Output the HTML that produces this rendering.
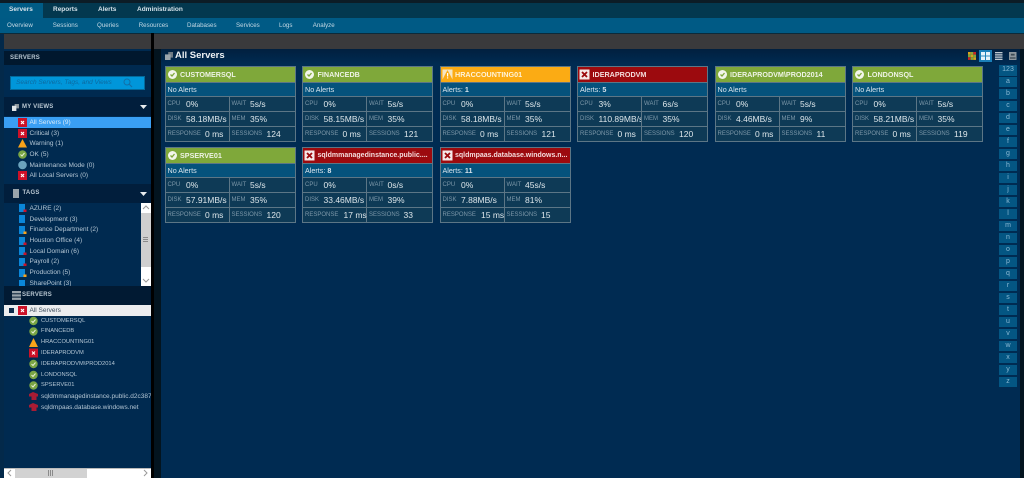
<!DOCTYPE html>
<html style="background:#002a50"><head><meta charset="utf-8"><style>
html,body{margin:0;padding:0;width:1024px;height:478px;overflow:hidden;background:#002a50}
body{font-family:"Liberation Sans",sans-serif;position:relative;color:#fff;filter:blur(.35px)}
div,span,svg{position:absolute;box-sizing:border-box;white-space:nowrap}
.tab{top:3px;font-size:6.500px;font-weight:bold;color:#d5e2ea;line-height:14px}
.sub{top:19px;font-size:6.200px;color:#c3d8e4;line-height:13px}
.c{width:131px;height:76px;background:#0e3a56;border:1px solid #5c7686}
.h{left:0;top:0;width:129px;height:15px;font-size:7.200px;font-weight:bold;line-height:15px;color:#eef3e4;padding-left:14.500px;overflow:hidden}
.g{background:#7fa83a}.o{background:#fbab14}.r{background:#9c0a0e}
.a{left:0;top:15px;width:129px;height:15px;background:#05527c;border-top:1px solid #5c7686;border-bottom:1px solid #5c7686;font-size:7.200px;line-height:13px;padding-left:2px;color:#d8e4ec}
.l{font-size:6px;color:#7c97a8;line-height:15px}
.v{font-size:8.500px;color:#dde6ea;line-height:15px}
.hl{left:0;width:129px;height:1px;background:#5c7686}
.vl{left:63px;top:30px;width:1px;height:44px;background:#5c7686}
.si{font-size:6.500px;color:#b3c6d4;line-height:11px}
.u{font-size:5.750px}
.ic{left:0;top:1px;width:13px;height:13px}
.az{left:999px;width:18px;height:10.500px;margin-top:-.5px;background:#045683;color:#8ab9d4;font-size:7px;line-height:10.500px;text-align:center}
.bar{left:4px;width:147px;height:19px;background:#011e3c}
.bt{font-size:6px;font-weight:bold;color:#b9c7d2;letter-spacing:.2px}
</style></head><body>
<div style="left:0;top:0;width:1024px;height:3px;background:#0c1c26"></div>
<div style="left:0;top:3px;width:1024px;height:15px;background:#03384f"></div>
<div style="left:0;top:3px;width:43px;height:15px;background:#005b85"></div>
<div style="left:0;top:18px;width:1024px;height:15px;background:#005a85"></div>
<div style="left:0;top:33px;width:1024px;height:1px;background:#0c2a3a"></div>
<div class="tab" style="left:9px">Servers</div><div class="tab" style="left:53px">Reports</div><div class="tab" style="left:98px">Alerts</div><div class="tab" style="left:137px">Administration</div>
<div class="sub" style="left:7px">Overview</div><div class="sub" style="left:52.700px">Sessions</div><div class="sub" style="left:97px">Queries</div><div class="sub" style="left:138.700px">Resources</div><div class="sub" style="left:187px">Databases</div><div class="sub" style="left:236px">Services</div><div class="sub" style="left:279px">Logs</div><div class="sub" style="left:312.700px">Analyze</div>

<div style="left:0;top:34px;width:4px;height:444px;background:#03294a"></div>
<div style="left:4px;top:34px;width:147px;height:15px;background:#3a3a3c"></div>
<div style="left:154px;top:34px;width:870px;height:15px;background:#3a3a3c"></div>
<div style="left:151px;top:33px;width:3px;height:445px;background:#000"></div>
<div style="left:154px;top:49px;width:7px;height:429px;background:#03141f"></div>
<div style="left:161px;top:49px;width:859px;height:429px;background:#002b52"></div>
<div style="left:161px;top:49px;width:859px;height:15px;background:linear-gradient(#01203f,#002b52)"></div>
<div style="left:1020px;top:49px;width:4px;height:429px;background:#03141f"></div>

<div style="left:4px;top:51px;width:147px;height:14px;background:#01182e"></div>
<div class="bt" style="left:10px;top:54px;line-height:8px">SERVERS</div>
<div style="left:10px;top:76px;width:134.500px;height:13.500px;background:#0096da;border:1px solid #046a9b"></div>
<div style="left:16px;top:78px;font-size:6.500px;font-style:italic;color:#0c6aa0;line-height:9px">Search Servers, Tags, and Views</div>
<svg style="left:123px;top:78px" width="10" height="10" viewBox="0 0 10 10"><circle cx="4" cy="4" r="3" fill="none" stroke="#1270a8" stroke-width="1"/><path d="M6 6l3 3" stroke="#1270a8" stroke-width="1.200"/></svg>

<div class="bar" style="top:97px"></div>
<svg style="left:12px;top:104px" width="7" height="7" viewBox="0 0 8 8"><rect x="3" y="0" width="5" height="5" fill="#8b959c"/><rect x="0" y="2" width="5" height="6" fill="#dfe3e6"/></svg>
<div class="bt" style="left:22px;top:103px;line-height:8px">MY VIEWS</div>
<svg style="left:140px;top:105px" width="7" height="4" viewBox="0 0 7 4"><path d="M0 0h7L3.500 4z" fill="#e8ecee"/></svg>
<div style="left:4px;top:117px;width:147px;height:11px;background:#3a9ff3"></div>

<svg style="left:18px;top:117px" width="9" height="10" viewBox="0 0 9 10"><rect y="1" width="9" height="9" fill="#cc1128"/><path d="M3 4l3 3M6 4l-3 3" stroke="#fff" stroke-width="1.200"/></svg>
<div class="si" style="left:29.500px;top:116.500px;color:#d8ebfa">All Servers (9)</div>
<svg style="left:18px;top:128px" width="9" height="10" viewBox="0 0 9 10"><rect y="1" width="9" height="9" fill="#cc1128"/><path d="M3 4l3 3M6 4l-3 3" stroke="#fff" stroke-width="1.200"/></svg>
<div class="si" style="left:29.500px;top:127.500px">Critical (3)</div>
<svg style="left:18px;top:138px" width="9" height="10" viewBox="0 0 9 10"><path d="M4.500 1L9 9.500H0z" fill="#f9a31a"/></svg>
<div class="si" style="left:29.500px;top:138px">Warning (1)</div>
<svg style="left:18px;top:149px" width="9" height="10" viewBox="0 0 9 10"><circle cx="4.500" cy="5.500" r="4.300" fill="#79a544"/><path d="M2.500 5.500l1.500 1.500 2.500-3" fill="none" stroke="#e8f0d8" stroke-width="1"/></svg>
<div class="si" style="left:29.500px;top:148.500px">OK (5)</div>
<svg style="left:18px;top:160px" width="9" height="10" viewBox="0 0 9 10"><circle cx="4.500" cy="5" r="4.300" fill="#6ba3bd"/></svg>
<div class="si" style="left:29.500px;top:159.500px">Maintenance Mode (0)</div>
<svg style="left:18px;top:170px" width="9" height="10" viewBox="0 0 9 10"><rect y="1" width="9" height="9" fill="#cc1128"/><path d="M3 4l3 3M6 4l-3 3" stroke="#fff" stroke-width="1.200"/></svg>
<div class="si" style="left:29.500px;top:170px">All Local Servers (0)</div>

<div class="bar" style="top:184px"></div>
<svg style="left:13px;top:189px" width="6" height="9" viewBox="0 0 6 9"><rect width="6" height="9" fill="#9aa4ab"/></svg>
<div class="bt" style="left:22.500px;top:189px;line-height:8px">TAGS</div>
<svg style="left:140px;top:192px" width="7" height="4" viewBox="0 0 7 4"><path d="M0 0h7L3.500 4z" fill="#e8ecee"/></svg>

<div style="left:4px;top:203px;width:137px;height:83px;overflow:hidden">
<svg style="left:15px;top:1px" width="10" height="82" viewBox="0 0 10 82"><g fill="#0a86d8"><path d="M0 0h6v8H0z"/><path d="M0 11h6v8H0z"/><path d="M0 22h6v8H0z"/><path d="M0 33h6v8H0z"/><path d="M0 43h6v8H0z"/><path d="M0 54h6v8H0z"/><path d="M0 65h6v8H0z"/><path d="M0 76h6v8H0z"/></g><g fill="#cc1128"><rect x="4.500" y="5.500" width="3" height="2.500"/><rect x="4.500" y="38.500" width="3" height="2.500"/><rect x="4.500" y="48.500" width="3" height="2.500"/><rect x="4.500" y="59.500" width="3" height="2.500"/></g><g fill="#f9a31a"><rect x="4.500" y="27.500" width="3" height="2.500"/><rect x="4.500" y="70.500" width="3" height="2.500"/></g></svg>
<div class="si" style="left:25.500px;top:-.5px">AZURE (2)</div>
<div class="si" style="left:25.500px;top:10.500px">Development (3)</div>
<div class="si" style="left:25.500px;top:21px">Finance Department (2)</div>
<div class="si" style="left:25.500px;top:32px">Houston Office (4)</div>
<div class="si" style="left:25.500px;top:42.500px">Local Domain (6)</div>
<div class="si" style="left:25.500px;top:53px">Payroll (2)</div>
<div class="si" style="left:25.500px;top:64px">Production (5)</div>
<div class="si" style="left:25.500px;top:74.500px">SharePoint (3)</div>
</div>
<div style="left:141px;top:203px;width:10px;height:83px;background:#fff"></div>
<div style="left:141px;top:213px;width:10px;height:54px;background:#cfcfcf"></div>
<svg style="left:142px;top:205px" width="8" height="5" viewBox="0 0 8 5"><path d="M1 4l3-3 3 3" fill="none" stroke="#999"/></svg>
<svg style="left:142px;top:278px" width="8" height="5" viewBox="0 0 8 5"><path d="M1 1l3 3 3-3" fill="none" stroke="#999"/></svg>
<div style="left:143px;top:237px;width:5px;height:6px;background:repeating-linear-gradient(#8a8a8a 0 1px,#cfcfcf 1px 2px)"></div>

<div class="bar" style="top:286px;background:#011a33"></div>
<svg style="left:12px;top:291px" width="9" height="9" viewBox="0 0 9 9"><g fill="#97a2aa"><rect width="9" height="2.300"/><rect y="3.300" width="9" height="2.300"/><rect y="6.600" width="9" height="2.300"/></g></svg>
<div class="bt" style="left:22px;top:291px;line-height:8px">SERVERS</div>
<div style="left:4px;top:305px;width:147px;height:11px;background:#ecedef"></div>
<div style="left:9px;top:308px;width:5px;height:5px;background:#0d2c4c"></div>
<svg style="left:18px;top:305px" width="9" height="10" viewBox="0 0 9 10"><rect y="1" width="9" height="9" fill="#cc1128"/><path d="M3 4l3 3M6 4l-3 3" stroke="#fff" stroke-width="1.200"/></svg>
<div class="si" style="left:29.500px;top:305px;color:#3c4c5c">All Servers</div>

<svg style="left:29px;top:316px" width="10" height="102" viewBox="0 0 10 102"><g fill="#79a544"><circle cx="4.500" cy="5" r="4.200"/><circle cx="4.500" cy="15.500" r="4.200"/><circle cx="4.500" cy="48" r="4.200"/><circle cx="4.500" cy="59" r="4.200"/><circle cx="4.500" cy="69.500" r="4.200"/></g><g fill="none" stroke="#e8f0d8"><path d="M2.500 5l1.500 1.500 2.500-3"/><path d="M2.500 15.500l1.500 1.500 2.500-3"/><path d="M2.500 48l1.500 1.500 2.500-3"/><path d="M2.500 59l1.500 1.500 2.500-3"/><path d="M2.500 69.500l1.500 1.500 2.500-3"/></g><path d="M4.500 22L9 31H0z" fill="#f9a31a"/><rect y="32.500" width="9" height="9" fill="#cc1128"/><path d="M3 35.500l3 3M6 35.500l-3 3" stroke="#fff"/><g fill="#a81c34"><path d="M0 78l4-2 5 2v2.500H7.500V84h-5v-3.500H0z"/><path d="M0 89l4-2 5 2v2.500H7.500V95h-5v-3.500H0z"/></g></svg>
<div class="si u" style="left:41px;top:315.500px">CUSTOMERSQL</div>
<div class="si u" style="left:41px;top:326px">FINANCEDB</div>
<div class="si u" style="left:41px;top:337px">HRACCOUNTING01</div>
<div class="si u" style="left:41px;top:347.500px">IDERAPRODVM</div>
<div class="si u" style="left:41px;top:358.500px">IDERAPRODVM\PROD2014</div>
<div class="si u" style="left:41px;top:369.500px">LONDONSQL</div>
<div class="si u" style="left:41px;top:380px">SPSERVE01</div>
<div style="left:41px;top:390.500px;width:110px;height:11px;overflow:hidden"><div class="si" style="left:0;top:0">sqldmmanagedinstance.public.d2c387</div></div>
<div class="si" style="left:41px;top:401.500px">sqldmpaas.database.windows.net</div>

<div style="left:4px;top:467.500px;width:147px;height:10.500px;background:#fff;border-top:1px solid #bbb"></div>
<div style="left:15px;top:468.500px;width:72px;height:9.500px;background:#d2d2d2"></div>
<svg style="left:7px;top:469px" width="5" height="8" viewBox="0 0 5 8"><path d="M4 1L1 4l3 3" fill="none" stroke="#999"/></svg>
<svg style="left:143px;top:469px" width="5" height="8" viewBox="0 0 5 8"><path d="M1 1l3 3-3 3" fill="none" stroke="#999"/></svg>
<div style="left:48px;top:470px;width:6px;height:6px;background:repeating-linear-gradient(90deg,#8a8a8a 0 1px,#d2d2d2 1px 2px)"></div>

<svg style="left:165px;top:52px" width="8" height="8" viewBox="0 0 10 10"><rect x="4" y="0" width="6" height="7" fill="#6f7b84"/><rect x="0" y="3" width="7" height="7" fill="#9ba5ac"/></svg>
<div style="left:175px;top:49px;font-size:9.500px;font-weight:bold;line-height:14px;color:#eef2f4">All Servers</div>

<svg style="left:967.500px;top:52px" width="8" height="8" viewBox="0 0 9 10" preserveAspectRatio="none"><rect width="3" height="3.300" fill="#d8a41c"/><rect x="3" width="3" height="3.300" fill="#8ca83a"/><rect x="6" width="3" height="3.300" fill="#c82424"/><rect y="3.300" width="3" height="3.300" fill="#7fa83a"/><rect x="3" y="3.300" width="3" height="3.300" fill="#d8a41c"/><rect x="6" y="3.300" width="3" height="3.300" fill="#7fa83a"/><rect y="6.600" width="3" height="3.300" fill="#c82424"/><rect x="3" y="6.600" width="3" height="3.300" fill="#7fa83a"/><rect x="6" y="6.600" width="3" height="3.300" fill="#d8a41c"/></svg>
<div style="left:979px;top:50px;width:13px;height:12px;background:#1a7fb8"></div>
<svg style="left:981px;top:52px" width="9" height="8" viewBox="0 0 9 9" preserveAspectRatio="none"><g fill="#e4f2fa"><rect width="4" height="4"/><rect x="5" width="4" height="4"/><rect y="5" width="4" height="4"/><rect x="5" y="5" width="4" height="4"/></g></svg>
<svg style="left:995px;top:52px" width="7.500" height="8" viewBox="0 0 8 9" preserveAspectRatio="none"><g fill="#c0cbd2"><rect width="8" height="1.500"/><rect y="2.500" width="8" height="1.500"/><rect y="5" width="8" height="1.500"/><rect y="7.500" width="8" height="1.500"/></g></svg>
<svg style="left:1009px;top:52px" width="7.500" height="8" viewBox="0 0 8 9" preserveAspectRatio="none"><rect width="8" height="9" fill="#8d979e"/><rect x="2" y="2" width="4" height="2" fill="#3c4a54"/><rect x="1" y="6" width="6" height="1.500" fill="#3c4a54"/></svg>

<!-- Card 1 -->
<div class="c" style="left:164.500px;top:66px"><div class="h g">CUSTOMERSQL<svg class="ic" viewBox="0 0 13 13"><circle cx="6.500" cy="6.500" r="4.500" fill="#f2f5ea"/><path d="M4.500 6.500l1.500 1.500 2.500-3" fill="none" stroke="#7fa83a" stroke-width="1.300"/></svg></div><div class="a">No Alerts</div><div class="hl" style="top:44px"></div><div class="hl" style="top:59px"></div><div class="vl"></div>
<span class="l" style="left:2px;top:30px">CPU</span><span class="v" style="left:20.500px;top:30px">0%</span><span class="l" style="left:66px;top:30px">WAIT</span><span class="v" style="left:84.500px;top:30px">5s/s</span>
<span class="l" style="left:2px;top:45px">DISK</span><span class="v" style="left:20.500px;top:45px">58.18MB/s</span><span class="l" style="left:66px;top:45px">MEM</span><span class="v" style="left:84.500px;top:45px">35%</span>
<span class="l" style="left:2px;top:60px">RESPONSE</span><span class="v" style="left:39.500px;top:60px">0 ms</span><span class="l" style="left:66px;top:60px">SESSIONS</span><span class="v" style="left:101px;top:60px">124</span></div>

<!-- Card 2 -->
<div class="c" style="left:302px;top:66px"><div class="h g">FINANCEDB<svg class="ic" viewBox="0 0 13 13"><circle cx="6.500" cy="6.500" r="4.500" fill="#f2f5ea"/><path d="M4.500 6.500l1.500 1.500 2.500-3" fill="none" stroke="#7fa83a" stroke-width="1.300"/></svg></div><div class="a">No Alerts</div><div class="hl" style="top:44px"></div><div class="hl" style="top:59px"></div><div class="vl"></div>
<span class="l" style="left:2px;top:30px">CPU</span><span class="v" style="left:20.500px;top:30px">0%</span><span class="l" style="left:66px;top:30px">WAIT</span><span class="v" style="left:84.500px;top:30px">5s/s</span>
<span class="l" style="left:2px;top:45px">DISK</span><span class="v" style="left:20.500px;top:45px">58.15MB/s</span><span class="l" style="left:66px;top:45px">MEM</span><span class="v" style="left:84.500px;top:45px">35%</span>
<span class="l" style="left:2px;top:60px">RESPONSE</span><span class="v" style="left:39.500px;top:60px">0 ms</span><span class="l" style="left:66px;top:60px">SESSIONS</span><span class="v" style="left:101px;top:60px">121</span></div>

<!-- Card 3 -->
<div class="c" style="left:439.500px;top:66px"><div class="h o" style="color:#fff3d8">HRACCOUNTING01<svg class="ic" viewBox="0 0 13 13"><rect x="1.500" y="1.500" width="10" height="10" fill="#f5e6c4"/><path d="M6.500 2L11.500 11.500H1.500z" fill="#fbab14"/><rect x="6" y="5" width="1.200" height="3.500" fill="#fff"/><rect x="6" y="9.300" width="1.200" height="1.200" fill="#fff"/></svg></div><div class="a">Alerts: <b>1</b></div><div class="hl" style="top:44px"></div><div class="hl" style="top:59px"></div><div class="vl"></div>
<span class="l" style="left:2px;top:30px">CPU</span><span class="v" style="left:20.500px;top:30px">0%</span><span class="l" style="left:66px;top:30px">WAIT</span><span class="v" style="left:84.500px;top:30px">5s/s</span>
<span class="l" style="left:2px;top:45px">DISK</span><span class="v" style="left:20.500px;top:45px">58.18MB/s</span><span class="l" style="left:66px;top:45px">MEM</span><span class="v" style="left:84.500px;top:45px">35%</span>
<span class="l" style="left:2px;top:60px">RESPONSE</span><span class="v" style="left:39.500px;top:60px">0 ms</span><span class="l" style="left:66px;top:60px">SESSIONS</span><span class="v" style="left:101px;top:60px">121</span></div>

<!-- Card 4 -->
<div class="c" style="left:577px;top:66px"><div class="h r" style="color:#f4dcdc">IDERAPRODVM<svg class="ic" viewBox="0 0 13 13"><rect x="1.500" y="1.500" width="10" height="10" fill="#f5e8e8"/><path d="M4 4l5 5M9 4l-5 5" stroke="#9c0a0e" stroke-width="1.800"/></svg></div><div class="a">Alerts: <b>5</b></div><div class="hl" style="top:44px"></div><div class="hl" style="top:59px"></div><div class="vl"></div>
<span class="l" style="left:2px;top:30px">CPU</span><span class="v" style="left:20.500px;top:30px">3%</span><span class="l" style="left:66px;top:30px">WAIT</span><span class="v" style="left:84.500px;top:30px">6s/s</span>
<span class="l" style="left:2px;top:45px">DISK</span><span style="left:20.500px;top:45px;width:42.500px;height:14px;overflow:hidden"><span class="v" style="left:0;top:0">110.89MB/s</span></span><span class="l" style="left:66px;top:45px">MEM</span><span class="v" style="left:84.500px;top:45px">35%</span>
<span class="l" style="left:2px;top:60px">RESPONSE</span><span class="v" style="left:39.500px;top:60px">0 ms</span><span class="l" style="left:66px;top:60px">SESSIONS</span><span class="v" style="left:101px;top:60px">120</span></div>

<!-- Card 5 -->
<div class="c" style="left:714.500px;top:66px"><div class="h g">IDERAPRODVM\PROD2014<svg class="ic" viewBox="0 0 13 13"><circle cx="6.500" cy="6.500" r="4.500" fill="#f2f5ea"/><path d="M4.500 6.500l1.500 1.500 2.500-3" fill="none" stroke="#7fa83a" stroke-width="1.300"/></svg></div><div class="a">No Alerts</div><div class="hl" style="top:44px"></div><div class="hl" style="top:59px"></div><div class="vl"></div>
<span class="l" style="left:2px;top:30px">CPU</span><span class="v" style="left:20.500px;top:30px">0%</span><span class="l" style="left:66px;top:30px">WAIT</span><span class="v" style="left:84.500px;top:30px">5s/s</span>
<span class="l" style="left:2px;top:45px">DISK</span><span class="v" style="left:20.500px;top:45px">4.46MB/s</span><span class="l" style="left:66px;top:45px">MEM</span><span class="v" style="left:84.500px;top:45px">9%</span>
<span class="l" style="left:2px;top:60px">RESPONSE</span><span class="v" style="left:39.500px;top:60px">0 ms</span><span class="l" style="left:66px;top:60px">SESSIONS</span><span class="v" style="left:101px;top:60px">11</span></div>

<!-- Card 6 -->
<div class="c" style="left:852px;top:66px"><div class="h g">LONDONSQL<svg class="ic" viewBox="0 0 13 13"><circle cx="6.500" cy="6.500" r="4.500" fill="#f2f5ea"/><path d="M4.500 6.500l1.500 1.500 2.500-3" fill="none" stroke="#7fa83a" stroke-width="1.300"/></svg></div><div class="a">No Alerts</div><div class="hl" style="top:44px"></div><div class="hl" style="top:59px"></div><div class="vl"></div>
<span class="l" style="left:2px;top:30px">CPU</span><span class="v" style="left:20.500px;top:30px">0%</span><span class="l" style="left:66px;top:30px">WAIT</span><span class="v" style="left:84.500px;top:30px">5s/s</span>
<span class="l" style="left:2px;top:45px">DISK</span><span class="v" style="left:20.500px;top:45px">58.21MB/s</span><span class="l" style="left:66px;top:45px">MEM</span><span class="v" style="left:84.500px;top:45px">35%</span>
<span class="l" style="left:2px;top:60px">RESPONSE</span><span class="v" style="left:39.500px;top:60px">0 ms</span><span class="l" style="left:66px;top:60px">SESSIONS</span><span class="v" style="left:101px;top:60px">119</span></div>

<!-- Card 7 -->
<div class="c" style="left:164.500px;top:146.500px"><div class="h g">SPSERVE01<svg class="ic" viewBox="0 0 13 13"><circle cx="6.500" cy="6.500" r="4.500" fill="#f2f5ea"/><path d="M4.500 6.500l1.500 1.500 2.500-3" fill="none" stroke="#7fa83a" stroke-width="1.300"/></svg></div><div class="a">No Alerts</div><div class="hl" style="top:44px"></div><div class="hl" style="top:59px"></div><div class="vl"></div>
<span class="l" style="left:2px;top:30px">CPU</span><span class="v" style="left:20.500px;top:30px">0%</span><span class="l" style="left:66px;top:30px">WAIT</span><span class="v" style="left:84.500px;top:30px">5s/s</span>
<span class="l" style="left:2px;top:45px">DISK</span><span class="v" style="left:20.500px;top:45px">57.91MB/s</span><span class="l" style="left:66px;top:45px">MEM</span><span class="v" style="left:84.500px;top:45px">35%</span>
<span class="l" style="left:2px;top:60px">RESPONSE</span><span class="v" style="left:39.500px;top:60px">0 ms</span><span class="l" style="left:66px;top:60px">SESSIONS</span><span class="v" style="left:101px;top:60px">120</span></div>

<!-- Card 8 -->
<div class="c" style="left:302px;top:146.500px"><div class="h r" style="font-size:7px;color:#f4dcdc">sqldmmanagedinstance.public....<svg class="ic" viewBox="0 0 13 13"><rect x="1.500" y="1.500" width="10" height="10" fill="#f5e8e8"/><path d="M4 4l5 5M9 4l-5 5" stroke="#9c0a0e" stroke-width="1.800"/></svg></div><div class="a">Alerts: <b>8</b></div><div class="hl" style="top:44px"></div><div class="hl" style="top:59px"></div><div class="vl"></div>
<span class="l" style="left:2px;top:30px">CPU</span><span class="v" style="left:20.500px;top:30px">0%</span><span class="l" style="left:66px;top:30px">WAIT</span><span class="v" style="left:84.500px;top:30px">0s/s</span>
<span class="l" style="left:2px;top:45px">DISK</span><span class="v" style="left:20.500px;top:45px">33.46MB/s</span><span class="l" style="left:66px;top:45px">MEM</span><span class="v" style="left:84.500px;top:45px">39%</span>
<span class="l" style="left:2px;top:60px">RESPONSE</span><span class="v" style="left:40.500px;top:60px">17 ms</span><span class="l" style="left:66px;top:60px">SESSIONS</span><span class="v" style="left:100.500px;top:60px">33</span></div>

<!-- Card 9 -->
<div class="c" style="left:439.500px;top:146.500px"><div class="h r" style="font-size:7px;color:#f4dcdc">sqldmpaas.database.windows.n...<svg class="ic" viewBox="0 0 13 13"><rect x="1.500" y="1.500" width="10" height="10" fill="#f5e8e8"/><path d="M4 4l5 5M9 4l-5 5" stroke="#9c0a0e" stroke-width="1.800"/></svg></div><div class="a">Alerts: <b>11</b></div><div class="hl" style="top:44px"></div><div class="hl" style="top:59px"></div><div class="vl"></div>
<span class="l" style="left:2px;top:30px">CPU</span><span class="v" style="left:20.500px;top:30px">0%</span><span class="l" style="left:66px;top:30px">WAIT</span><span class="v" style="left:84.500px;top:30px">45s/s</span>
<span class="l" style="left:2px;top:45px">DISK</span><span class="v" style="left:20.500px;top:45px">7.88MB/s</span><span class="l" style="left:66px;top:45px">MEM</span><span class="v" style="left:84.500px;top:45px">81%</span>
<span class="l" style="left:2px;top:60px">RESPONSE</span><span class="v" style="left:40.500px;top:60px">15 ms</span><span class="l" style="left:66px;top:60px">SESSIONS</span><span class="v" style="left:100.500px;top:60px">15</span></div>

<div class="az" style="top:65.500px">123</div><div class="az" style="top:77px">a</div><div class="az" style="top:89px">b</div><div class="az" style="top:101px">c</div><div class="az" style="top:113px">d</div><div class="az" style="top:125px">e</div><div class="az" style="top:137px">f</div><div class="az" style="top:149px">g</div><div class="az" style="top:161px">h</div><div class="az" style="top:173px">i</div><div class="az" style="top:185px">j</div><div class="az" style="top:197px">k</div><div class="az" style="top:209px">l</div><div class="az" style="top:221px">m</div><div class="az" style="top:233px">n</div><div class="az" style="top:245px">o</div><div class="az" style="top:257px">p</div><div class="az" style="top:269px">q</div><div class="az" style="top:281px">r</div><div class="az" style="top:293px">s</div><div class="az" style="top:305px">t</div><div class="az" style="top:317px">u</div><div class="az" style="top:329px">v</div><div class="az" style="top:341px">w</div><div class="az" style="top:353px">x</div><div class="az" style="top:365px">y</div><div class="az" style="top:377px">z</div>
</body></html>
